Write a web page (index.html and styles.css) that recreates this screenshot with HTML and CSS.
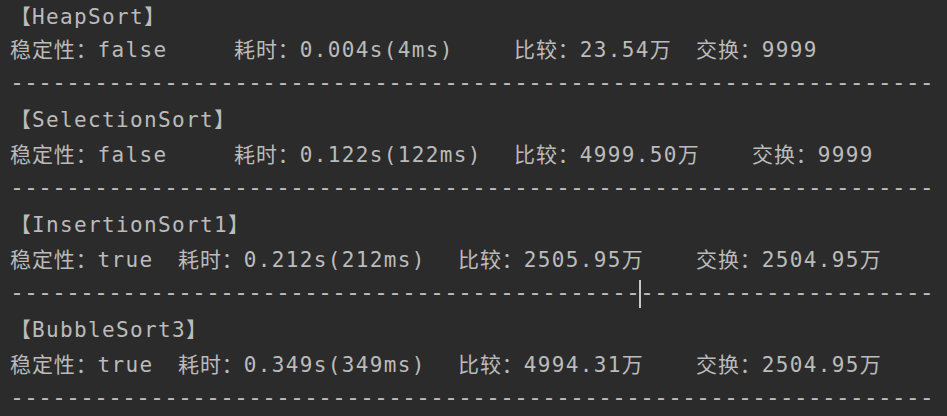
FILE: index.html
```html
<!DOCTYPE html>
<html lang="zh-CN">
<head>
<meta charset="utf-8">
<title>Console</title>
<link rel="stylesheet" href="styles.css">
</head>
<body>
<div class="console">
<div class="line title"><span class="cn">【</span>HeapSort<span class="cn">】</span></div>
<div class="line"><span class="cn">稳定性：</span>false &#9;<span class="cn">耗时：</span>0.004s(4ms) &#9;<span class="cn">比较：</span>23.54<span class="cn">万</span>&#9; <span class="cn">交换：</span>9999</div>
<div class="line sep">------------------------------------------------------------------</div>
<div class="line"><span class="cn">【</span>SelectionSort<span class="cn">】</span></div>
<div class="line"><span class="cn">稳定性：</span>false &#9;<span class="cn">耗时：</span>0.122s(122ms) &#9;<span class="cn">比较：</span>4999.50<span class="cn">万</span>&#9; <span class="cn">交换：</span>9999</div>
<div class="line sep">------------------------------------------------------------------</div>
<div class="line"><span class="cn">【</span>InsertionSort1<span class="cn">】</span></div>
<div class="line"><span class="cn">稳定性：</span>true &#9;<span class="cn">耗时：</span>0.212s(212ms) &#9;<span class="cn">比较：</span>2505.95<span class="cn">万</span>&#9; <span class="cn">交换：</span>2504.95<span class="cn">万</span></div>
<div class="line sep">------------------------------------------------------------------</div>
<div class="line"><span class="cn">【</span>BubbleSort3<span class="cn">】</span></div>
<div class="line"><span class="cn">稳定性：</span>true &#9;<span class="cn">耗时：</span>0.349s(349ms) &#9;<span class="cn">比较：</span>4994.31<span class="cn">万</span>&#9; <span class="cn">交换：</span>2504.95<span class="cn">万</span></div>
<div class="line sep">------------------------------------------------------------------</div>
</div>
<div class="caret"></div>
</body>
</html>
```

FILE: styles.css
```css
html, body {
  margin: 0;
  padding: 0;
  background: #2b2b2b;
  overflow: hidden;
}

body {
  width: 947px;
  height: 416px;
  position: relative;
}

.console {
  padding-left: 10px;
  color: #bbbbbb;
  font-family: "DejaVu Sans Mono", "Noto Sans CJK SC", monospace;
  font-size: 21px;
  letter-spacing: 1.36px;
  tab-size: 56px;
  -moz-tab-size: 56px;
}

.line {
  height: 35px;
  line-height: 31px;
  white-space: pre;
}

.line.title {
  line-height: 35px;
}

.line.sep {
  font-size: 23.25px;
  letter-spacing: 0;
  line-height: 23.5px;
}

.cn {
  font-family: "Noto Sans CJK SC", sans-serif;
  font-size: 21px;
  letter-spacing: 0.9px;
  line-height: 1;
}

.caret {
  position: absolute;
  left: 639px;
  top: 280px;
  width: 2px;
  height: 28px;
  background: #c8c8c8;
}
```
